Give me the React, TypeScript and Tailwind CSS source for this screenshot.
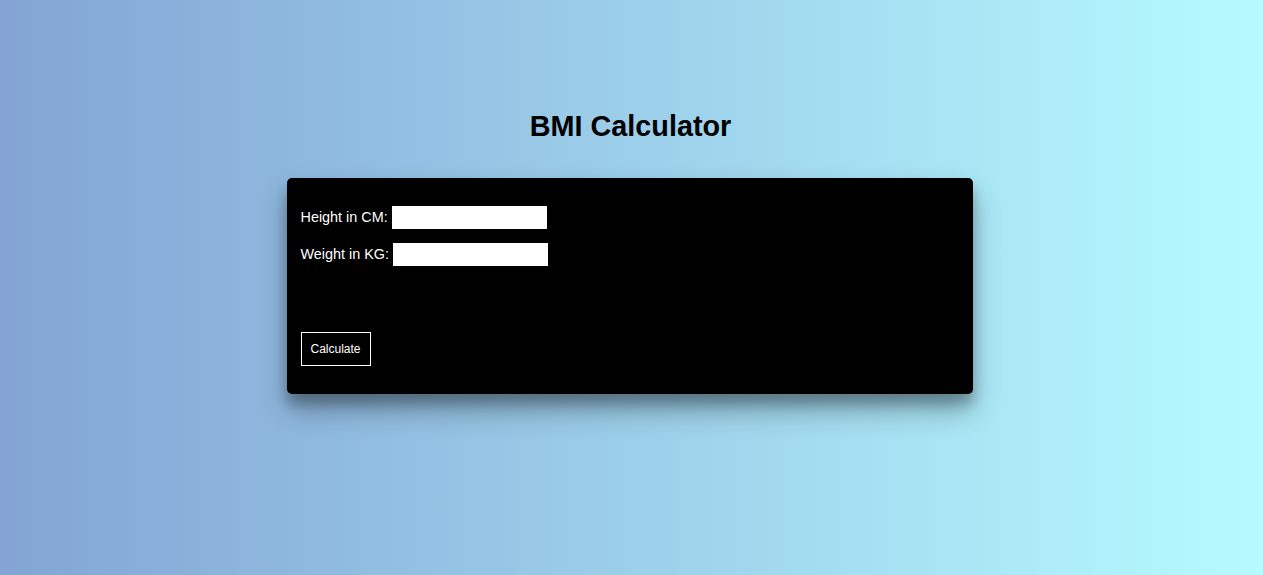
export default function App() {
  return (
    <div
      className="min-h-[575px] w-full bg-gradient-to-r from-[#83a4d4] to-[#b6fbff] flex flex-col items-center"
      style={{ fontFamily: '"Liberation Sans", Arial, sans-serif' }}
    >
      <h1 className="mt-[110px] -translate-x-[1px] text-[28.8px] leading-[32px] font-bold text-black">BMI Calculator</h1>
      <div className="mt-[36px] w-[686px] -translate-x-[2px] rounded-[5px] bg-black pl-[14px] pt-[28px] pb-[28px] shadow-[0_16px_28px_rgba(0,0,0,0.3),0_10px_12px_rgba(0,0,0,0.22)]">
        <div className="flex h-[23px] items-center text-[14.4px] text-white">
          <span>Height in CM:</span>
          <input type="text" className="ml-[4px] h-[23px] w-[155px] bg-white border-0 outline-none" />
        </div>
        <div className="mt-[14px] flex h-[23px] items-center text-[14.4px] text-white">
          <span>Weight in KG:</span>
          <input type="text" className="ml-[4px] h-[23px] w-[155px] bg-white border-0 outline-none" />
        </div>
        <button className="mt-[66px] flex h-[34px] w-[70px] items-center justify-center border border-white text-[12px] text-white bg-black">
          Calculate
        </button>
      </div>
    </div>
  );
}
